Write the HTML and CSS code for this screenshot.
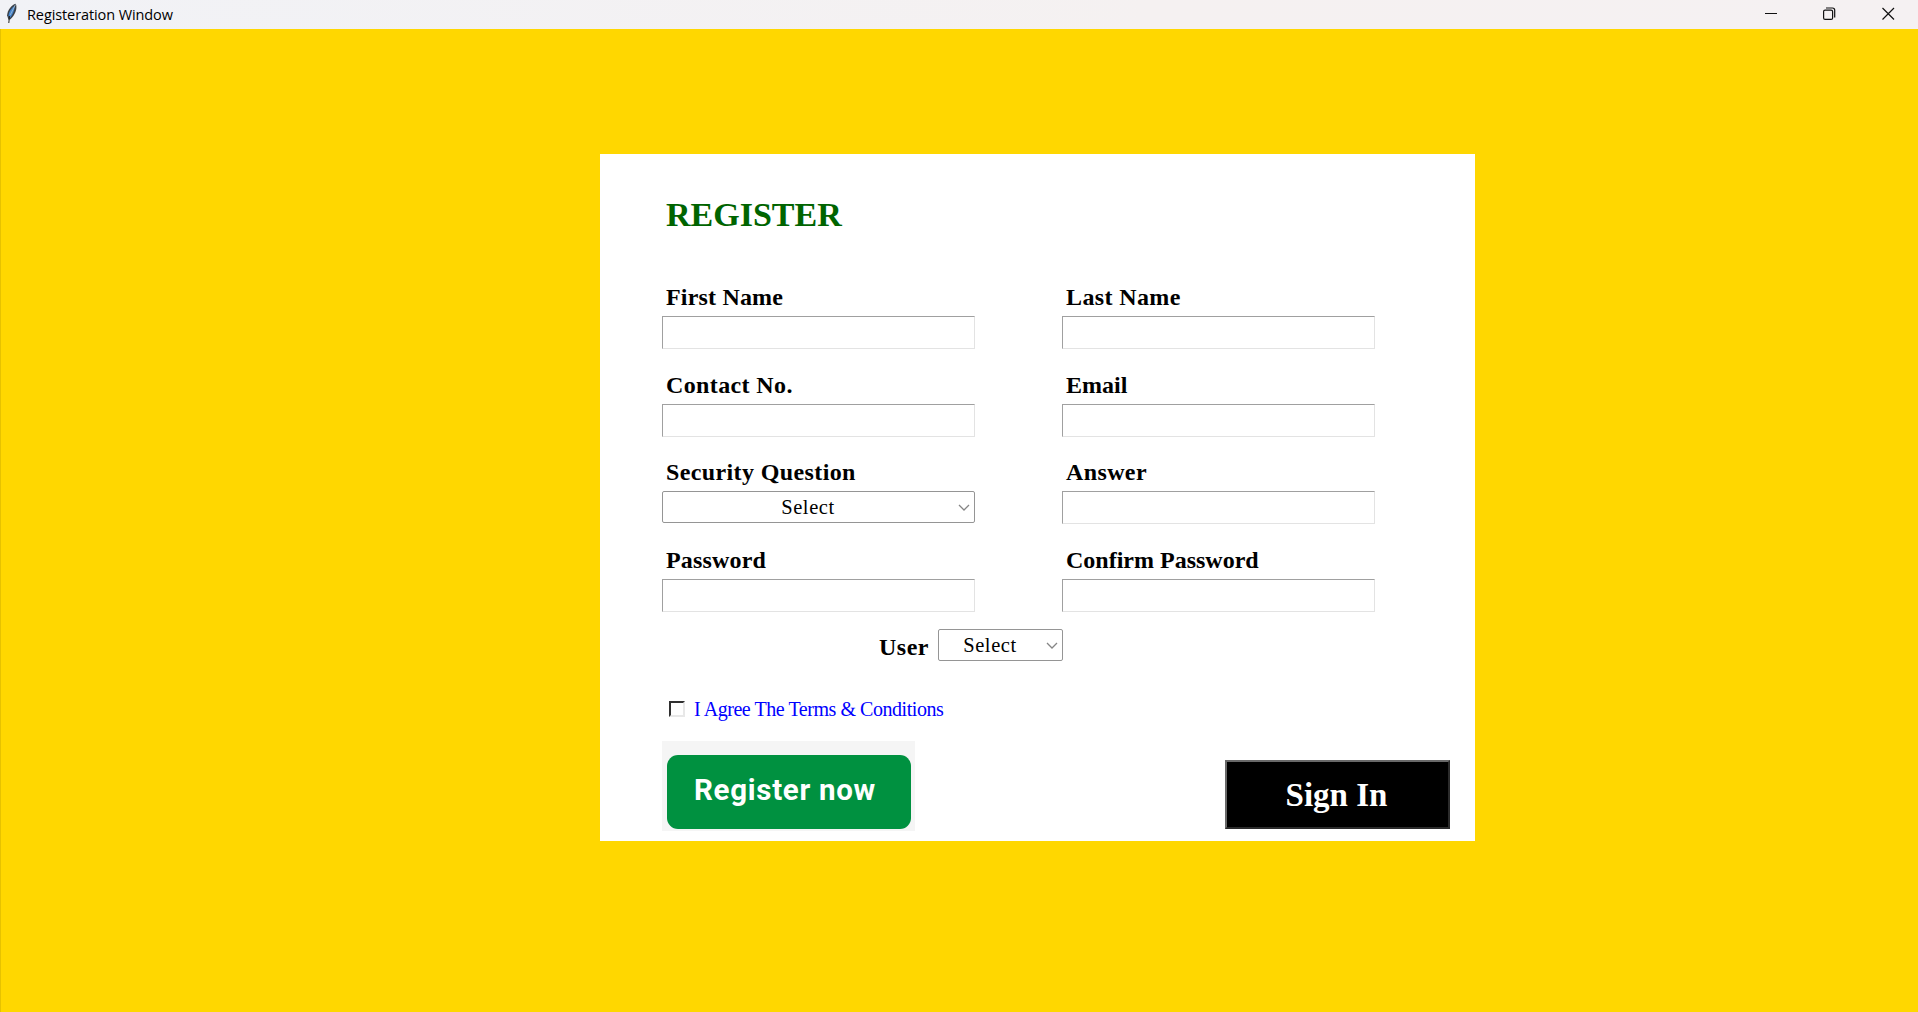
FILE: index.html
```html
<!DOCTYPE html>
<html lang="en">
<head>
<meta charset="utf-8">
<title>Registeration Window</title>
<link rel="stylesheet" href="styles.css">
</head>
<body>
<header class="titlebar">
  <svg class="feather" width="12" height="21" viewBox="0 0 12 21">
    <path d="M9.800.8C5.500 2 1.600 7 1.100 12.200L2.500 16.800 4.500 16.200C9 12.200 11.700 5.500 9.800.8Z" fill="#3a4048"/>
    <path d="M8.900 2.500C5 5 2.700 9.200 2.400 13L4 15C6.700 11.500 8.600 7.500 8.900 2.500Z" fill="#4385d0"/>
    <path d="M9.500 1.500 4.200 12" fill="none" stroke="#a9bccd" stroke-width=".8"/>
    <path d="M3.500 13 2.800 20" stroke="#222" stroke-width="1"/>
  </svg>
  <h1 class="window-title">Registeration Window</h1>
  <div class="controls">
    <svg width="13" height="14" viewBox="0 0 13 14"><path d="M1 6.500H13" stroke="#111"/></svg>
    <svg width="13" height="14" viewBox="0 0 13 14" fill="none" stroke="#111" stroke-width="1.200"><rect x=".6" y="3.100" width="9" height="9.300" rx="1.500"/><path d="M3 1H9.500Q11.700 1 11.700 3.200V10.500"/></svg>
    <svg width="13" height="14" viewBox="0 0 13 14"><path d="M.5 1 12 12.500M12 1 .5 12.500" stroke="#111" stroke-width="1.200"/></svg>
  </div>
</header>
<main class="desktop">
  <form class="card">
    <h2 class="heading">REGISTER</h2>
    <div class="grid">
      <label class="field"><span class="label snug">First Name</span><input class="entry" type="text"></label>
      <label class="field"><span class="label wide">Last Name</span><input class="entry" type="text"></label>
      <label class="field"><span class="label wide">Contact No.</span><input class="entry" type="text"></label>
      <label class="field"><span class="label">Email</span><input class="entry" type="text"></label>
      <div class="field"><span class="label wide">Security Question</span>
        <div class="combo"><span class="combo-value">Select</span><svg class="chevron" width="12" height="7" viewBox="0 0 12 7"><path d="M1 1 6 6 11 1"/></svg></div></div>
      <label class="field"><span class="label wide">Answer</span><input class="entry" type="text"></label>
      <label class="field"><span class="label snug">Password</span><input class="entry" type="password"></label>
      <label class="field"><span class="label">Confirm Password</span><input class="entry" type="password"></label>
    </div>
    <div class="user-row"><span class="user-label">User</span>
      <div class="combo combo-small"><span class="combo-value">Select</span><svg class="chevron" width="12" height="7" viewBox="0 0 12 7"><path d="M1 1 6 6 11 1"/></svg></div></div>
    <label class="terms"><input class="check" type="checkbox"><span>I Agree The Terms &amp; Conditions</span></label>
    <div class="actions">
      <div class="register-frame"><button class="register" type="button">Register now</button></div>
      <button class="signin" type="button">Sign In</button>
    </div>
  </form>
</main>
</body>
</html>
```
FILE: styles.css
```css
* { box-sizing: border-box; }
body {
  margin: 0;
  height: 1012px;
  display: flex;
  flex-direction: column;
  overflow: hidden;
  font-family: "Liberation Serif", "Times New Roman", serif;
  color: #000;
}
.titlebar {
  height: 29px;
  flex: none;
  display: flex;
  align-items: flex-start;
  padding: 3px 23px 0 6px;
  background: linear-gradient(90deg, #f1f2f6, #f5f1f1 60%, #f5f1f2);
}
.feather { display: block; }
.window-title {
  margin: 1px 0 0 9px;
  font: 400 14.500px/21px "Open Sans", "Noto Sans", sans-serif;
  letter-spacing: -.1px;
  white-space: nowrap;
}
.controls { display: flex; gap: 46px; margin: 4px 0 0 auto; }
.controls svg { display: block; }
.desktop {
  flex: 1;
  background: #ffd700;
  border-left: 1px solid #e6c200;
  padding: 125px 0 0 599px;
}
.card {
  width: 875px;
  height: 687px;
  background: #fff;
  display: flex;
  flex-direction: column;
  padding: 39px 25px 0 62px;
}
.heading {
  margin: 0 0 0 4px;
  height: 88px;
  font-size: 34px;
  line-height: 44px;
  color: #006400;
}
.grid {
  display: grid;
  grid-template-columns: 313px 313px;
  column-gap: 87px;
  grid-auto-rows: 87.500px;
  height: 348px;
}
.field { display: flex; flex-direction: column; }
.label {
  height: 35px;
  padding-left: 4px;
  font-size: 24px;
  font-weight: bold;
  line-height: 32px;
  white-space: nowrap;
}
.label.wide { letter-spacing: .38px; }
.label.snug { letter-spacing: .18px; }
.entry {
  width: 313px;
  height: 33px;
  margin: 0;
  padding: 0 4px;
  border: 1px solid;
  border-color: #a0a0a0 #e3e3e3 #e3e3e3 #a0a0a0;
  background: #fff;
  font: 20px "Liberation Serif", serif;
  outline: 0;
}
.combo {
  display: flex;
  align-items: center;
  width: 313px;
  height: 32px;
  padding-right: 4px;
  border: 1px solid #959595;
  border-radius: 2px;
  font-size: 20.500px;
  letter-spacing: .6px;
}
.combo-value { flex: 1; text-align: center; padding-right: 5px; }
.chevron { fill: none; stroke: #858585; stroke-width: 1.300; }
.user-row { display: flex; height: 65px; padding: 0 0 0 217px; }
.user-label {
  width: 59px;
  font-size: 24px;
  font-weight: bold;
  line-height: 36px;
  letter-spacing: .5px;
}
.combo-small { width: 125px; }
.terms {
  display: flex;
  height: 47px;
  padding: 0 0 0 7px;
  font-size: 20px;
  line-height: 30px;
  letter-spacing: -.45px;
  color: #00f;
  white-space: nowrap;
}
.check {
  appearance: none;
  width: 16px;
  height: 16px;
  margin: 7px 9px 0 0;
  border: 2px solid;
  border-color: #303030 #e8e8e8 #e8e8e8 #303030;
}
.actions { display: flex; justify-content: space-between; align-items: flex-start; }
.register-frame {
  width: 253px;
  height: 90px;
  padding: 14px 4px 2px 5px;
  background: #f5f5f5;
}
.register {
  width: 244px;
  height: 74px;
  padding: 0 8px 5px 0;
  border: 0;
  border-radius: 11px;
  background: #009140;
  color: #fff;
  font: 700 29.500px Roboto, sans-serif;
  letter-spacing: .7px;
}
.signin {
  width: 225px;
  height: 69px;
  margin-top: 19px;
  padding: 2px 2px 0 0;
  border: 2px solid;
  border-color: #696969 #2b2b2b #2b2b2b #696969;
  background: #000;
  color: #fff;
  font: 700 33px "Liberation Serif", serif;
}
```
